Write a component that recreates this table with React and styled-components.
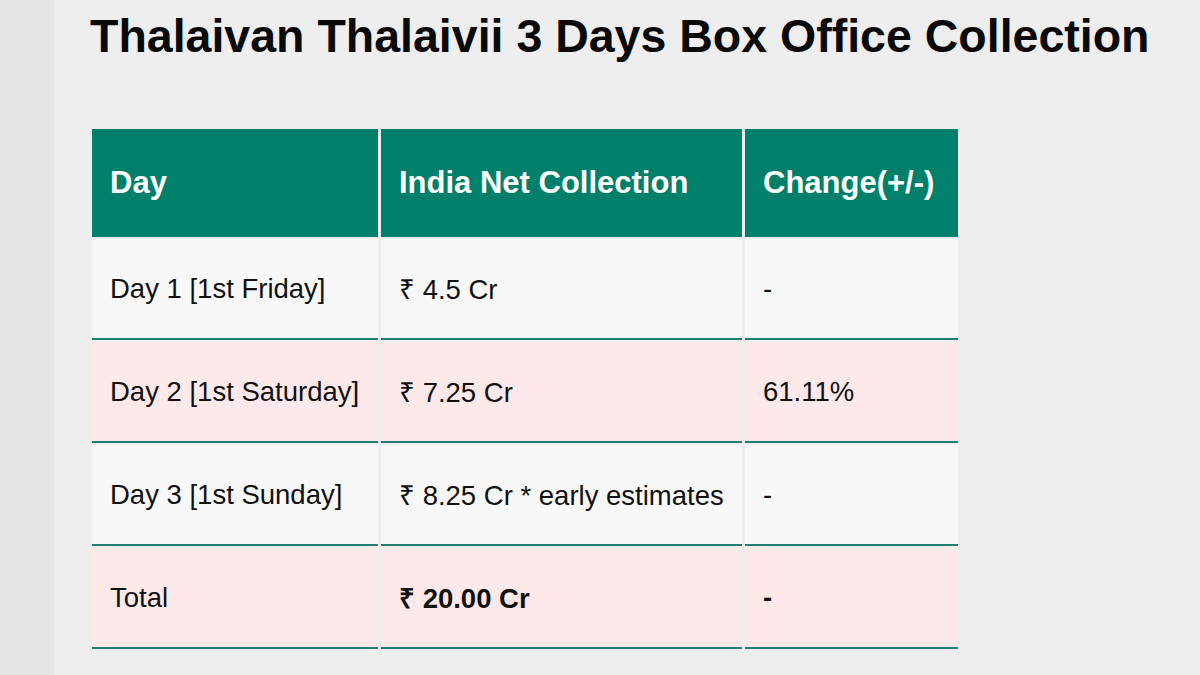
import React from 'react';
import styled, { createGlobalStyle } from 'styled-components';

const GlobalStyle = createGlobalStyle`
  html, body {
    margin: 0;
    padding: 0;
    background: #e6e6e6;
  }
  body {
    font-family: "Liberation Sans", Arial, Helvetica, sans-serif;
  }
`;

const Page = styled.div`
  display: flex;
  width: 1200px;
  height: 675px;
  overflow: hidden;
`;

const SideStrip = styled.div`
  width: 54px;
  flex-shrink: 0;
  background: #e6e6e6;
`;

const Panel = styled.main`
  flex: 1;
  background: #eeeeee;
  padding: 0 0 0 35px;
`;

const Title = styled.h1`
  margin: 6px 0 0 1px;
  font-size: 46.5px;
  font-weight: 700;
  line-height: 60px;
  color: #0a0a0a;
  letter-spacing: 0;
`;

const Table = styled.table`
  margin: 61px 0 0 0;
  border-collapse: separate;
  border-spacing: 3px 2px;
  table-layout: fixed;
  width: 872px;
`;

const HeadCell = styled.th`
  height: 108px;
  padding: 0 0 0 18px;
  background: #00806a;
  color: #ffffff;
  font-size: 31px;
  font-weight: 700;
  text-align: left;
  white-space: nowrap;
`;

const Row = styled.tr`
  background: ${p => (p.$pink ? '#fde9ea' : '#f8f8f8')};
`;

const Cell = styled.td`
  height: 99px;
  padding: 0 0 0 18px;
  border-bottom: 2px solid #23806c;
  color: #111111;
  font-size: 27.5px;
  font-weight: ${p => (p.$bold ? 700 : 400)};
  white-space: nowrap;
`;

const rows = [
  { day: 'Day 1 [1st Friday]', net: '₹ 4.5 Cr', change: '-' },
  { day: 'Day 2 [1st Saturday]', net: '₹ 7.25 Cr', change: '61.11%', pink: true },
  { day: 'Day 3 [1st Sunday]', net: '₹ 8.25 Cr * early estimates', change: '-' },
  { day: 'Total', net: '₹ 20.00 Cr', change: '-', pink: true, total: true },
];

export default function App() {
  return (
    <>
      <GlobalStyle />
      <Page>
        <SideStrip />
        <Panel>
          <Title>Thalaivan Thalaivii 3 Days Box Office Collection</Title>
          <Table>
            <colgroup>
              <col style={{ width: 286 }} />
              <col style={{ width: 361 }} />
              <col style={{ width: 213 }} />
            </colgroup>
            <thead>
              <tr>
                <HeadCell>Day</HeadCell>
                <HeadCell>India Net Collection</HeadCell>
                <HeadCell>Change(+/-)</HeadCell>
              </tr>
            </thead>
            <tbody>
              {rows.map(r => (
                <Row key={r.day} $pink={r.pink}>
                  <Cell>{r.day}</Cell>
                  <Cell $bold={r.total}>{r.net}</Cell>
                  <Cell $bold={r.total}>{r.change}</Cell>
                </Row>
              ))}
            </tbody>
          </Table>
        </Panel>
      </Page>
    </>
  );
}
